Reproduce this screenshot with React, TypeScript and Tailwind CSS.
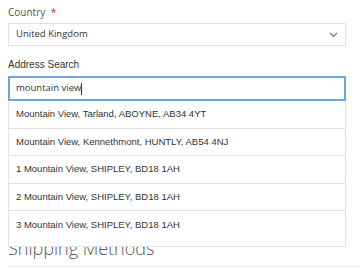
import React from "react";

const results = [
  "Mountain View, Tarland, ABOYNE, AB34 4YT",
  "Mountain View, Kennethmont, HUNTLY, AB54 4NJ",
  "1 Mountain View, SHIPLEY, BD18 1AH",
  "2 Mountain View, SHIPLEY, BD18 1AH",
  "3 Mountain View, SHIPLEY, BD18 1AH",
];

export default function App() {
  return (
    <div className="w-[360px] h-[272px] overflow-hidden bg-white pl-2 pr-[14px] pt-[5px] font-['Open_Sans',sans-serif] text-[#333]">
      {/* Country */}
      <label className="block text-[10px] leading-[14px] text-[#555]">
        Country <span className="text-[#e02b27] ml-[3px]">*</span>
      </label>
      <div className="mt-[4px] h-[23px] border border-[#e2e2e2] flex items-center justify-between pl-[7px] pr-[7px]">
        <span className="text-[9.5px]">United Kingdom</span>
        <svg width="9" height="6" viewBox="0 0 9 6" className="text-[#777]">
          <path d="M1 1l3.5 3.5L8 1" fill="none" stroke="currentColor" strokeWidth="1.2" />
        </svg>
      </div>

      {/* Address search */}
      <label className="block mt-[12px] text-[10px] leading-[14px] font-['Liberation_Sans',Arial,sans-serif]">
        Address Search
      </label>
      <div className="relative mt-[4px]">
        <div className="h-[25px] border-2 border-[#68a8e0] flex items-center pl-[6px] text-[9.5px]">
          mountain view<span className="w-px h-[12px] bg-[#333]" />
        </div>

        <div className="absolute left-0 right-0 top-full bg-white border border-t-0 border-[#e2e2e2] pb-[7px] font-['Liberation_Sans',Arial,sans-serif] text-[9.5px] text-[#333] z-10">
          {results.map((r, i) => (
            <div
              key={r}
              className={`h-[27.5px] flex items-center pl-[7px] ${i < results.length - 1 ? "border-b border-[#e2e2e2]" : ""}`}
            >
              {r}
            </div>
          ))}
        </div>
      </div>

      <h2 className="mt-[135px] text-[18px] font-light leading-[24px] text-[#555]">Shipping Methods</h2>
      <div className="mt-[6px] -mr-[14px] border-t border-[#e8e8e8]" />
    </div>
  );
}
